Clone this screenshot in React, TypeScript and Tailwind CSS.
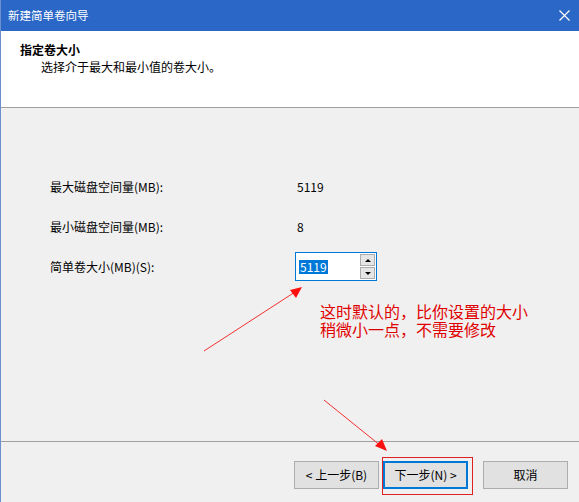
import React from 'react';

const font = { fontFamily: '"Noto Sans CJK SC", "Liberation Sans", sans-serif' };

const rows = [
  { label: '最大磁盘空间量(MB):', value: '5119' },
  { label: '最小磁盘空间量(MB):', value: '8' },
];

function SpinBox() {
  return (
    <div className="flex h-[29px] w-[82px] border border-[#0078d7] bg-white">
      <div className="flex flex-1 items-center pl-[3px]">
        <span className="bg-[#0078d7] px-[1px] text-[12px] leading-[14px] text-white">5119</span>
      </div>
      <div className="my-[1px] mr-[1px] flex w-[15px] flex-col gap-[1px]">
        <div className="flex flex-1 items-center justify-center border border-[#acacac] bg-[#e5e5e5]">
          <div className="h-0 w-0 border-x-[3px] border-b-[3px] border-x-transparent border-b-black" />
        </div>
        <div className="flex flex-1 items-center justify-center border border-[#acacac] bg-[#e5e5e5]">
          <div className="h-0 w-0 border-x-[3px] border-t-[3px] border-x-transparent border-t-black" />
        </div>
      </div>
    </div>
  );
}

function Btn({ children, primary }: { children: React.ReactNode; primary?: boolean }) {
  return (
    <button
      className={`flex h-[28px] w-[85px] items-center justify-center bg-[#e1e1e1] text-[12px] text-[#000] ${
        primary ? 'border-2 border-[#0078d7]' : 'border border-[#adadad]'
      }`}
    >
      {children}
    </button>
  );
}

export default function App() {
  return (
    <div className="relative flex h-[502px] w-[579px] flex-col overflow-hidden border-l border-[#6b8fcf] bg-[#f0f0f0] text-black" style={font}>
      {/* title bar */}
      <div className="flex h-[31px] shrink-0 items-center justify-between bg-[#2b67c6] pl-[7px] pr-[8px] text-white">
        <span className="text-[11.5px]">新建简单卷向导</span>
        <svg width="11" height="11" viewBox="0 0 11 11" className="mr-[1px]">
          <path d="M0.5 0.5 L10.5 10.5 M10.5 0.5 L0.5 10.5" stroke="white" strokeWidth="1.2" />
        </svg>
      </div>

      {/* header */}
      <div className="h-[77px] shrink-0 border-b border-[#a0a0a0] bg-white pl-[19px] pt-[10px]">
        <div className="text-[12px] font-bold leading-[17px]">指定卷大小</div>
        <div className="pl-[21px] text-[12px] leading-[18px]">选择介于最大和最小值的卷大小。</div>
      </div>

      {/* body */}
      <div className="flex flex-1 flex-col gap-[23px] pl-[49px] pt-[70px]">
        {rows.map(r => (
          <div key={r.label} className="flex h-[17px] items-center text-[12px]">
            <span className="w-[247px]">{r.label}</span>
            <span>{r.value}</span>
          </div>
        ))}
        <div className="-mt-[6px] flex items-center text-[12px]">
          <span className="w-[245px]">简单卷大小(MB)(S):</span>
          <SpinBox />
        </div>
      </div>

      {/* footer */}
      <div className="flex h-[61px] shrink-0 justify-end gap-[4px] border-t border-[#a0a0a0] pr-[11px] pt-[19px]">
        <Btn>&lt; 上一步(B)</Btn>
        <Btn primary>下一步(N) &gt;</Btn>
        <div className="w-[7px]" />
        <Btn>取消</Btn>
      </div>

      {/* annotations */}
      <div className="absolute left-[319px] top-[302px] text-[16px] leading-[18px] text-[#e00000]">
        <div>这时默认的，比你设置的大小</div>
        <div>稍微小一点，不需要修改</div>
      </div>
      <div className="absolute left-[381px] top-[457px] h-[38px] w-[91px] border border-[#e02020]" />
      <svg className="pointer-events-none absolute left-0 top-0" width="579" height="502">
        <line x1="203" y1="351" x2="294" y2="292" stroke="#f03030" strokeWidth="1" />
        <polygon points="301,287 289,290 295,298" fill="#ff1010" />
        <line x1="323" y1="400" x2="380" y2="446" stroke="#f03030" strokeWidth="1" />
        <polygon points="386,451 374,446 381,439" fill="#ff1010" />
      </svg>
    </div>
  );
}
